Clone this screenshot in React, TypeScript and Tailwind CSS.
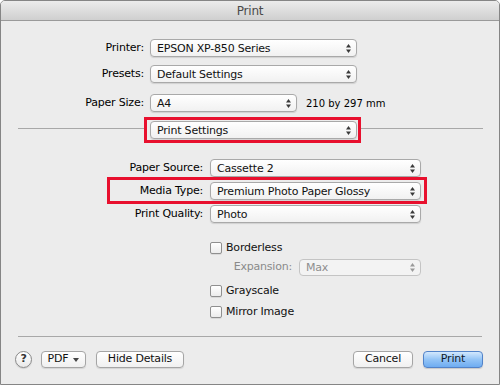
import React from 'react';
import clsx from 'clsx';

const Arrows = ({ disabled }: { disabled?: boolean }) => (
  <svg width="5" height="9" viewBox="0 0 5 9" className="shrink-0">
    <polygon points="0,3.5 2.5,0 5,3.5" fill={disabled ? '#9a9a9a' : '#3a3a3a'} />
    <polygon points="0,5.5 2.5,9 5,5.5" fill={disabled ? '#9a9a9a' : '#3a3a3a'} />
  </svg>
);

type PopupProps = {
  text: string;
  className: string;
  disabled?: boolean;
};

const Popup = ({ text, className, disabled }: PopupProps) => (
  <div
    className={clsx(
      'flex shrink-0 items-center justify-between rounded-[4px] border pl-[6px] pr-[5px]',
      disabled
        ? 'border-[#c4c4c4] bg-[#f3f3f3] text-[#8e8e8e]'
        : 'border-[#a9a9a9] bg-gradient-to-b from-white to-[#f1f1f1] text-[#111] shadow-[0_1px_1px_rgba(0,0,0,0.12)]',
      className
    )}
  >
    <span className="leading-none">{text}</span>
    <Arrows disabled={disabled} />
  </div>
);

const Checkbox = ({ label }: { label: string }) => (
  <div className="flex h-[14px] items-center pl-[209px]">
    <span className="h-[12px] w-[12px] rounded-[2px] border border-[#8f8f8f] bg-gradient-to-b from-white to-[#ececec] shadow-[0_1px_0_rgba(0,0,0,0.08)]" />
    <span className="ml-[4px] text-[#111]">{label}</span>
  </div>
);

const Button = ({ children, className }: { children: React.ReactNode; className: string }) => (
  <div
    className={clsx(
      'flex h-[17px] items-center justify-center rounded-[4px] border border-[#a5a5a5] bg-gradient-to-b from-white to-[#f0f0f0] text-[#111] shadow-[0_1px_1px_rgba(0,0,0,0.1)]',
      className
    )}
  >
    {children}
  </div>
);

const App = () => {
  return (
    <div
      className="h-[385px] w-[500px] bg-white text-[11px] tracking-[-0.2px]"
      style={{ fontFamily: '"Lucida Grande", "DejaVu Sans", sans-serif' }}
    >
      <div className="flex h-[385px] flex-col overflow-hidden rounded-t-[5px] border border-[#858585] bg-[#ececec]">
        {/* title bar */}
        <div className="flex h-[20px] shrink-0 items-center justify-center border-b border-[#9a9a9a] bg-gradient-to-b from-[#ececec] to-[#cfcfcf] text-[12px] text-[#4a4a4a]">
          Print
        </div>

        {/* printer / presets / paper size */}
        <div className="mt-[18px] flex h-[18px] items-center">
          <span className="w-[149px] shrink-0 pr-[6px] text-right">Printer:</span>
          <Popup text="EPSON XP-850 Series" className="h-[18px] w-[207px]" />
        </div>
        <div className="mt-[8px] flex h-[18px] items-center">
          <span className="w-[149px] shrink-0 pr-[6px] text-right">Presets:</span>
          <Popup text="Default Settings" className="h-[18px] w-[207px]" />
        </div>
        <div className="mt-[11px] flex h-[18px] items-center">
          <span className="w-[149px] shrink-0 pr-[6px] text-right">Paper Size:</span>
          <Popup text="A4" className="h-[18px] w-[147px]" />
          <span className="ml-[9px] text-[10px] tracking-normal">210 by 297 mm</span>
        </div>

        {/* section switcher */}
        <div className="mt-[5px] flex items-start">
          <div className="ml-[17px] mt-[11px] h-px w-[126px] shrink-0 bg-[#a8a8a8]" />
          <div className="shrink-0 border-[3px] border-[#e8102e] pb-[1px] pl-[3px] pr-[1px] pt-[1px]">
            <Popup text="Print Settings" className="h-[18px] w-[207px]" />
          </div>
          <div className="mr-[16px] mt-[11px] h-px flex-1 bg-[#a8a8a8]" />
        </div>

        {/* print settings */}
        <div className="mt-[16px] flex h-[18px] items-center">
          <span className="w-[209px] shrink-0 pr-[7px] text-right">Paper Source:</span>
          <Popup text="Cassette 2" className="h-[18px] w-[211px]" />
        </div>
        <div className="ml-[106px] flex w-[320px] items-center border-[3px] border-[#e8102e] pb-[1px] pr-[3px] pt-[2px]">
          <span className="w-[100px] shrink-0 pr-[7px] text-right">Media Type:</span>
          <Popup text="Premium Photo Paper Glossy" className="h-[18px] w-[211px]" />
        </div>
        <div className="mt-[1px] flex h-[18px] items-center">
          <span className="w-[209px] shrink-0 pr-[7px] text-right">Print Quality:</span>
          <Popup text="Photo" className="h-[18px] w-[211px]" />
        </div>

        <div className="mt-[18px]">
          <Checkbox label="Borderless" />
        </div>
        <div className="mt-[4px] flex h-[17px] items-center">
          <span className="w-[298px] shrink-0 pr-[7px] text-right text-[#8a8a8a]">Expansion:</span>
          <Popup text="Max" className="h-[17px] w-[122px]" disabled />
        </div>
        <div className="mt-[8px]">
          <Checkbox label="Grayscale" />
        </div>
        <div className="mt-[7px]">
          <Checkbox label="Mirror Image" />
        </div>

        {/* footer */}
        <div className="mx-[17px] mt-[17px] h-px bg-[#a8a8a8]" />
        <div className="mt-[14px] flex items-center pl-[14px] pr-[16px]">
          <div className="flex h-[17px] w-[17px] items-center justify-center rounded-full border border-[#8a8a8a] bg-gradient-to-b from-white to-[#e9e9e9] text-[11px] font-bold text-[#333] shadow-[0_1px_1px_rgba(0,0,0,0.12)]">
            ?
          </div>
          <Button className="ml-[9px] w-[45px] gap-[5px]">
            <span>PDF</span>
            <svg width="6" height="4" viewBox="0 0 6 4">
              <polygon points="0,0 6,0 3,4" fill="#444" />
            </svg>
          </Button>
          <Button className="ml-[10px] w-[88px]">Hide Details</Button>
          <div className="flex-1" />
          <Button className="w-[60px]">Cancel</Button>
          <div className="ml-[10px] flex h-[17px] w-[60px] items-center justify-center rounded-[4px] border border-[#5283c9] bg-gradient-to-b from-[#d3e8fd] via-[#93c4f6] to-[#6eacf1] text-[#0e1a2b] shadow-[0_1px_1px_rgba(0,0,0,0.15)]">
            Print
          </div>
        </div>
      </div>
    </div>
  );
};

export default App;
